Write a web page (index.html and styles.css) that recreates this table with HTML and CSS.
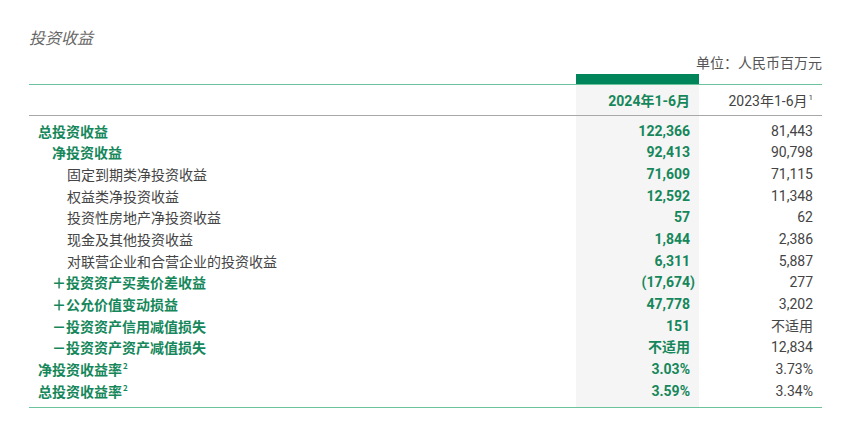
FILE: index.html
```html
<!DOCTYPE html>
<html lang="zh-CN">
<head>
<meta charset="utf-8">
<title>投资收益</title>
<link rel="stylesheet" href="styles.css">
</head>
<body>
<div class="page">
  <h2 class="title">投资收益</h2>
  <div class="unit">单位：人民币百万元</div>
  <table class="tbl">
    <colgroup>
      <col class="c-label">
      <col class="c-num">
      <col class="c-num">
    </colgroup>
    <thead>
      <tr class="bar-row"><th></th><th class="bar"></th><th></th></tr>
      <tr class="head">
        <th></th>
        <th class="cur">2024年1-6月</th>
        <th class="prev">2023年1-6月<sup class="fn">1</sup></th>
      </tr>
    </thead>
    <tbody>
      <tr class="pad"><td></td><td class="cur"></td><td></td></tr>
      <tr class="l0 strong"><td class="lbl">总投资收益</td><td class="cur">122,366</td><td class="prev">81,443</td></tr>
      <tr class="l1 strong"><td class="lbl">净投资收益</td><td class="cur">92,413</td><td class="prev">90,798</td></tr>
      <tr class="l2"><td class="lbl">固定到期类净投资收益</td><td class="cur">71,609</td><td class="prev">71,115</td></tr>
      <tr class="l2"><td class="lbl">权益类净投资收益</td><td class="cur">12,592</td><td class="prev">11,348</td></tr>
      <tr class="l2"><td class="lbl">投资性房地产净投资收益</td><td class="cur">57</td><td class="prev">62</td></tr>
      <tr class="l2"><td class="lbl">现金及其他投资收益</td><td class="cur">1,844</td><td class="prev">2,386</td></tr>
      <tr class="l2"><td class="lbl">对联营企业和合营企业的投资收益</td><td class="cur">6,311</td><td class="prev">5,887</td></tr>
      <tr class="l1 strong"><td class="lbl">＋投资资产买卖价差收益</td><td class="cur"><span class="neg">(17,674)</span></td><td class="prev">277</td></tr>
      <tr class="l1 strong"><td class="lbl">＋公允价值变动损益</td><td class="cur">47,778</td><td class="prev">3,202</td></tr>
      <tr class="l1 strong"><td class="lbl">－投资资产信用减值损失</td><td class="cur">151</td><td class="prev">不适用</td></tr>
      <tr class="l1 strong"><td class="lbl">－投资资产资产减值损失</td><td class="cur">不适用</td><td class="prev">12,834</td></tr>
      <tr class="l0 strong"><td class="lbl">净投资收益率<sup class="fn">2</sup></td><td class="cur">3.03%</td><td class="prev">3.73%</td></tr>
      <tr class="l0 strong"><td class="lbl">总投资收益率<sup class="fn">2</sup></td><td class="cur">3.59%</td><td class="prev">3.34%</td></tr>
      <tr class="pad pad-end"><td></td><td class="cur"></td><td></td></tr>
    </tbody>
  </table>
</div>
</body>
</html>
```

FILE: styles.css
```css
* { box-sizing: border-box; }
html, body { margin: 0; padding: 0; background: #ffffff; }
body {
  font-family: Roboto, "Noto Sans CJK SC", sans-serif;
  color: #444444;
}
.page {
  width: 865px;
  padding: 27px 43px 0 29px;
}
.title {
  margin: 0;
  font-size: 16px;
  line-height: 20px;
  font-weight: normal;
  font-style: italic;
  color: #666666;
  font-family: "Noto Sans CJK SC", sans-serif;
}
.unit {
  margin-top: 5px;
  text-align: right;
  font-size: 14px;
  line-height: 20px;
  color: #555555;
  font-family: "Noto Sans CJK SC", sans-serif;
}
.tbl {
  margin-top: 2px;
  width: 793px;
  border-collapse: collapse;
  table-layout: fixed;
  font-size: 14px;
}
.c-label { width: 547px; }
.c-num { width: 123px; }
.tbl th, .tbl td {
  padding: 0;
  font-weight: normal;
}
.bar-row th { height: 10px; }
.bar-row .bar { background: #00845a; }
.head th {
  height: 31px;
  border-top: 1.5px solid #6cc29c;
  border-bottom: 1px solid #a8a8a8;
  text-align: right;
  padding-right: 9px;
  font-size: 14px;
  line-height: 20px;
  padding-top: 2px;
}
.head .cur { font-weight: bold; color: #16875b; }
.head .prev { color: #444444; }
.cur { background: #f5f5f5; }
.pad td { height: 5px; }
.pad-end td { height: 5.5px; }
tbody { border-bottom: 1.5px solid #6cc29c; }
tbody tr:not(.pad) td {
  height: 21.67px;
  line-height: 20px;
  white-space: nowrap;
}
td.cur, td.prev {
  text-align: right;
  padding-right: 9px;
}
td.cur { font-weight: bold; color: #16875b; }
td.prev { color: #444444; }
.neg { margin-right: -5px; }
.lbl { font-family: "Noto Sans CJK SC", sans-serif; color: #444444; }
.l0 .lbl { padding-left: 9px; }
.l1 .lbl { padding-left: 23px; }
.l2 .lbl { padding-left: 38px; }
.strong .lbl { font-weight: bold; color: #16875b; }
.fn {
  font-size: 8px;
  line-height: 0;
  vertical-align: 6px;
  margin-left: 1px;
}
```
